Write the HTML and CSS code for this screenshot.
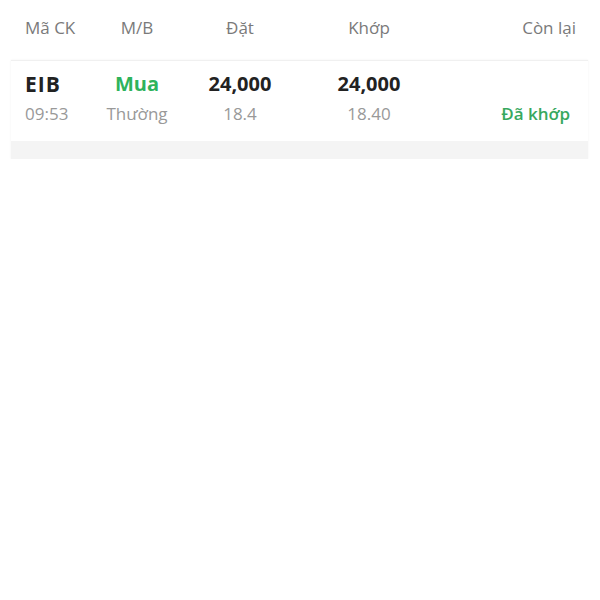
FILE: index.html
```html
<!DOCTYPE html>
<html lang="vi">
<head>
<meta charset="utf-8">
<link rel="stylesheet" href="styles.css">
</head>
<body>
<div class="table">
  <div class="head grid">
    <div class="c1">Mã CK</div>
    <div class="c2">M/B</div>
    <div class="c3">Đặt</div>
    <div class="c4">Khớp</div>
    <div class="c5">Còn lại</div>
  </div>
  <div class="card">
    <div class="row grid main">
      <div class="c1 sym">EIB</div>
      <div class="c2 buy">Mua</div>
      <div class="c3 num">24,000</div>
      <div class="c4 num">24,000</div>
      <div class="c5"></div>
    </div>
    <div class="row grid sub">
      <div class="c1">09:53</div>
      <div class="c2">Thường</div>
      <div class="c3">18.4</div>
      <div class="c4">18.40</div>
      <div class="c5 status">Đã khớp</div>
    </div>
    <div class="band"></div>
  </div>
</div>
</body>
</html>
```
FILE: styles.css
```css
html, body {
  margin: 0;
  padding: 0;
  background: #ffffff;
  font-family: "Open Sans", "Noto Sans", sans-serif;
}

.grid {
  display: grid;
  grid-template-columns: 70px 84px 122px 136px 1fr;
  align-items: center;
}

.c1 { text-align: left; }
.c2, .c3, .c4 { text-align: center; }
.c5 { text-align: right; }

.head {
  height: 60px;
  box-sizing: border-box;
  padding: 16px 24px 20px 25px;
  font-size: 17px;
  line-height: 24px;
  color: #7a7a7a;
  align-items: start;
}

.card {
  margin: 0 12px 0 11px;
  border-top: 1px solid #f0f0f0;
  box-shadow: 0 0 2px rgba(0, 0, 0, 0.06);
  background: #fff;
}

.row {
  padding: 0 18px 0 14px;
  line-height: 24px;
}

.main {
  padding-top: 11px;
  font-size: 20px;
  font-weight: 700;
  color: #222;
}

.main .sym {
  font-size: 21px;
  letter-spacing: 1px;
}

.main .buy {
  color: #2eb35c;
}

.sub {
  margin-top: 6px;
  padding-bottom: 15px;
  font-size: 17px;
  color: #999;
}

.sub .status {
  color: #37a85e;
  font-weight: 600;
}

.band {
  height: 18px;
  background: #f4f4f4;
}
```
